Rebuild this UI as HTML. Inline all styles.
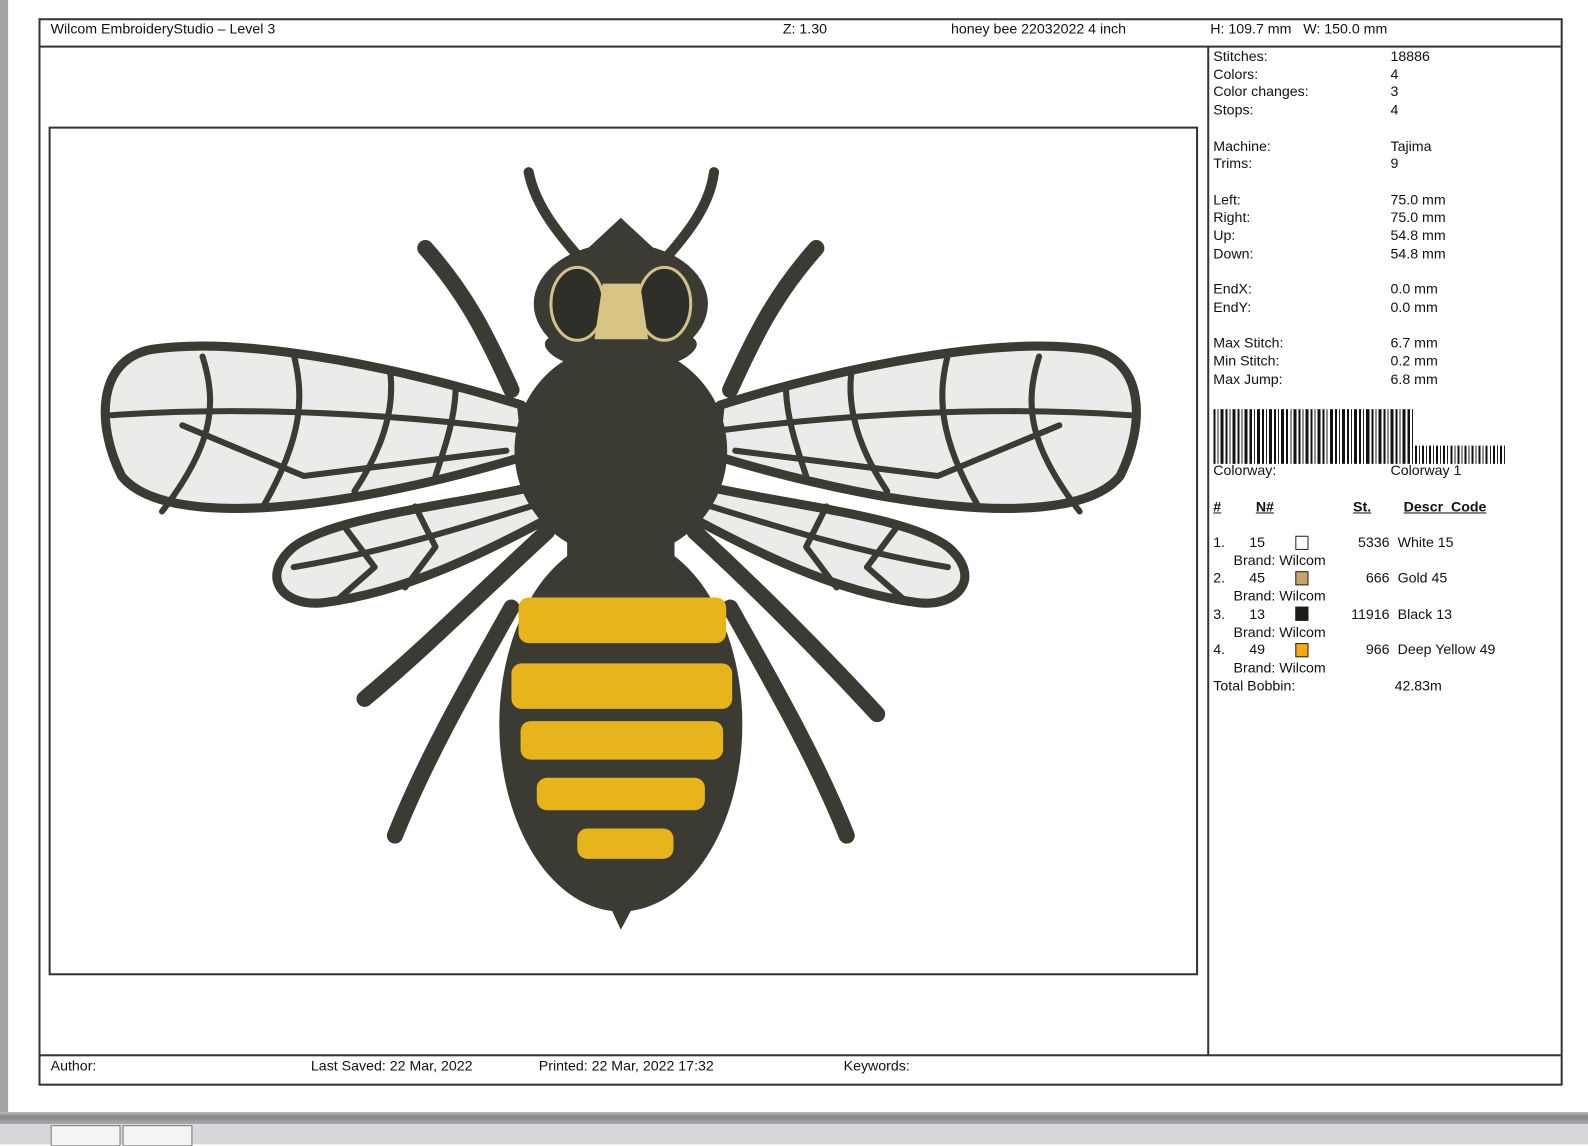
<!DOCTYPE html>
<html><head><meta charset="utf-8"><style>
body{margin:0;width:1588px;height:1130px;position:relative;background:#fff;font-family:"Liberation Sans",sans-serif;font-size:14px;color:#111;overflow:hidden}
#w{position:absolute;left:0;top:0;width:1568px;height:1116px;transform:scale(1.01276);transform-origin:0 0}
.a{position:absolute;white-space:nowrap}
.l{position:absolute;background:#333}
</style></head><body><div id="w">
<div class="a" style="left:0;top:0;width:8px;height:1100px;background:#a4a4a4"></div>
<div class="a" style="left:0;top:1098px;width:1588px;height:12px;background:linear-gradient(#bbb,#888 40%,#aaa)"></div>
<div class="a" style="left:0;top:1110px;width:1588px;height:20px;background:#d8d8dc"></div>
<div class="a" style="left:50px;top:1111px;width:67px;height:19px;background:#f4f4f4;border:1px solid #777"></div>
<div class="a" style="left:121px;top:1111px;width:67px;height:19px;background:#f4f4f4;border:1px solid #777"></div>

<div class="a" style="left:38px;top:18px;width:1501px;height:1050px;border:2px solid #333"></div>
<div class="l" style="left:38px;top:45px;width:1503px;height:2px"></div>
<div class="l" style="left:38px;top:1041px;width:1503px;height:2px"></div>
<div class="l" style="left:1192px;top:46px;width:2px;height:996px"></div>
<div class="a" style="left:48px;top:125px;width:1131px;height:834px;border:2px solid #333"></div>

<div class="a" style="left:50px;top:20px">Wilcom EmbroideryStudio – Level 3</div>
<div class="a" style="left:773px;top:20px">Z: 1.30</div>
<div class="a" style="left:939px;top:20px">honey bee 22032022 4 inch</div>
<div class="a" style="left:1195px;top:20px">H: 109.7 mm&nbsp;&nbsp;&nbsp;W: 150.0 mm</div>

<div class="a" style="left:50px;top:1044px">Author:</div>
<div class="a" style="left:307px;top:1044px">Last Saved: 22 Mar, 2022</div>
<div class="a" style="left:532px;top:1044px">Printed: 22 Mar, 2022 17:32</div>
<div class="a" style="left:833px;top:1044px">Keywords:</div>

<div class="a" style="left:1198px;top:47px;line-height:17.7px">Stitches:<br>Colors:<br>Color changes:<br>Stops:<br><br>Machine:<br>Trims:<br><br>Left:<br>Right:<br>Up:<br>Down:<br><br>EndX:<br>EndY:<br><br>Max Stitch:<br>Min Stitch:<br>Max Jump:</div>
<div class="a" style="left:1373px;top:47px;line-height:17.7px">18886<br>4<br>3<br>4<br><br>Tajima<br>9<br><br>75.0 mm<br>75.0 mm<br>54.8 mm<br>54.8 mm<br><br>0.0 mm<br>0.0 mm<br><br>6.7 mm<br>0.2 mm<br>6.8 mm</div>

<div class="a" style="left:1198px;top:404px;width:199px;height:54px;background:repeating-linear-gradient(90deg,#111 0 2px,#fff 2px 4px,#222 4px 5px,#fff 5px 7px,#111 7px 10px,#fff 10px 12px)"></div>
<div class="a" style="left:1397px;top:440px;width:91px;height:18px;background:repeating-linear-gradient(90deg,#111 0 2px,#fff 2px 4px,#222 4px 5px,#fff 5px 7px)"></div>
<div class="a" style="left:1198px;top:456px">Colorway:</div>
<div class="a" style="left:1373px;top:456px">Colorway 1</div>
<div class="a" style="left:1198px;top:492px;font-weight:bold;text-decoration:underline">#</div>
<div class="a" style="left:1240px;top:492px;font-weight:bold;text-decoration:underline">N#</div>
<div class="a" style="left:1336px;top:492px;font-weight:bold;text-decoration:underline">St.</div>
<div class="a" style="left:1386px;top:492px;font-weight:bold;text-decoration:underline">Descr_Code</div>

<div class="a" style="left:1198px;top:527px;line-height:17.7px">1.<br><br>2.<br><br>3.<br><br>4.<br><br>Total Bobbin:</div>
<div class="a" style="left:1218px;top:527px;line-height:17.7px">&nbsp;&nbsp;&nbsp;&nbsp;15<br>Brand: Wilcom<br>&nbsp;&nbsp;&nbsp;&nbsp;45<br>Brand: Wilcom<br>&nbsp;&nbsp;&nbsp;&nbsp;13<br>Brand: Wilcom<br>&nbsp;&nbsp;&nbsp;&nbsp;49<br>Brand: Wilcom</div>
<div class="a" style="left:1279px;top:529px;width:11px;height:12px;border:1px solid #222;background:#fff"></div>
<div class="a" style="left:1279px;top:564px;width:11px;height:12px;border:1px solid #222;background:#c4a66c"></div>
<div class="a" style="left:1279px;top:599px;width:11px;height:12px;border:1px solid #222;background:#1e1a17"></div>
<div class="a" style="left:1279px;top:635px;width:11px;height:12px;border:1px solid #222;background:#f6a813"></div>
<div class="a" style="left:1330px;top:527px;width:42px;text-align:right;line-height:17.7px">5336<br><br>666<br><br>11916<br><br>966</div>
<div class="a" style="left:1380px;top:527px;line-height:17.7px">White 15<br><br>Gold 45<br><br>Black 13<br><br>Deep Yellow 49</div>
<div class="a" style="left:1377px;top:669px">42.83m</div>

<svg class="a" style="left:0;top:0" width="1588" height="1130" viewBox="0 0 1588 1130">
<g stroke="#3b3b34" fill="none" stroke-linecap="round" stroke-linejoin="round">
<g fill="#e9ece9" stroke-width="9">
<path d="M515 400 C420 370 250 330 150 345 C95 355 95 420 120 470 C160 520 320 510 520 450 Z"/>
<path d="M530 480 C440 500 330 510 290 540 C255 570 280 600 320 595 C400 585 480 545 545 510 Z"/>
<path d="M711 400 C806 370 976 330 1076 345 C1131 355 1131 420 1106 470 C1066 520 906 510 706 450 Z"/>
<path d="M696 480 C786 500 896 510 936 540 C971 570 946 600 906 595 C826 585 746 545 681 510 Z"/>
</g>
<g stroke-width="6">
<path d="M110 410 C250 400 400 410 515 425"/><path d="M200 352 C215 400 210 440 160 505"/><path d="M290 350 C300 390 300 430 260 500"/><path d="M385 365 C390 400 380 440 350 485"/><path d="M450 380 C450 410 440 440 430 470"/><path d="M180 420 L300 470 L500 445"/>
<path d="M290 560 C380 545 460 520 540 495"/><path d="M340 520 L370 560 L330 595"/><path d="M410 500 L430 540 L400 580"/>
<path d="M1116 410 C976 400 826 410 711 425"/><path d="M1026 352 C1011 400 1016 440 1066 505"/><path d="M936 350 C926 390 926 430 966 500"/><path d="M841 365 C836 400 846 440 876 485"/><path d="M776 380 C776 410 786 440 796 470"/><path d="M1046 420 L926 470 L726 445"/>
<path d="M936 560 C846 545 766 520 686 495"/><path d="M886 520 L856 560 L896 595"/><path d="M816 500 L796 540 L826 580"/>
</g>
<g stroke-width="16">
<path d="M505 385 C480 330 460 290 420 245"/><path d="M721 385 C746 330 766 290 806 245"/>
<path d="M540 525 C480 580 420 640 360 690"/><path d="M686 525 C746 580 806 640 866 705"/>
<path d="M505 600 C460 680 420 750 390 825"/><path d="M721 600 C766 680 806 750 836 825"/>
<path d="M590 275 C560 240 530 210 522 170" stroke-width="10"/><path d="M640 275 C670 240 700 210 705 170" stroke-width="10"/>
</g>
<g fill="#3b3b34" stroke="none">
<circle cx="613" cy="445" r="105"/>
<rect x="560" y="520" width="106" height="40"/>
<ellipse cx="613" cy="715" rx="120" ry="185"/>
<path d="M600 890 L613 918 L628 890 Z"/>
<path d="M570 255 L613 215 L656 255 Z"/>
<ellipse cx="613" cy="300" rx="86" ry="60"/>
</g>
<ellipse cx="570" cy="300" rx="26" ry="36" fill="#2f2f2a" stroke="#d4c088" stroke-width="3"/>
<ellipse cx="656" cy="300" rx="26" ry="36" fill="#2f2f2a" stroke="#d4c088" stroke-width="3"/>
<path d="M595 280 L632 280 L640 335 L587 335 Z" fill="#d8c485" stroke="none"/>
<path d="M545 340 C560 365 666 365 681 340" stroke-width="14"/>
</g>
<g fill="#e8b41c">
<rect x="512" y="590" width="205" height="45" rx="10"/>
<rect x="505" y="655" width="218" height="45" rx="10"/>
<rect x="514" y="712" width="200" height="38" rx="10"/>
<rect x="530" y="768" width="166" height="32" rx="10"/>
<rect x="570" y="818" width="95" height="30" rx="10"/>
</g>
</svg>
</div></body></html>
